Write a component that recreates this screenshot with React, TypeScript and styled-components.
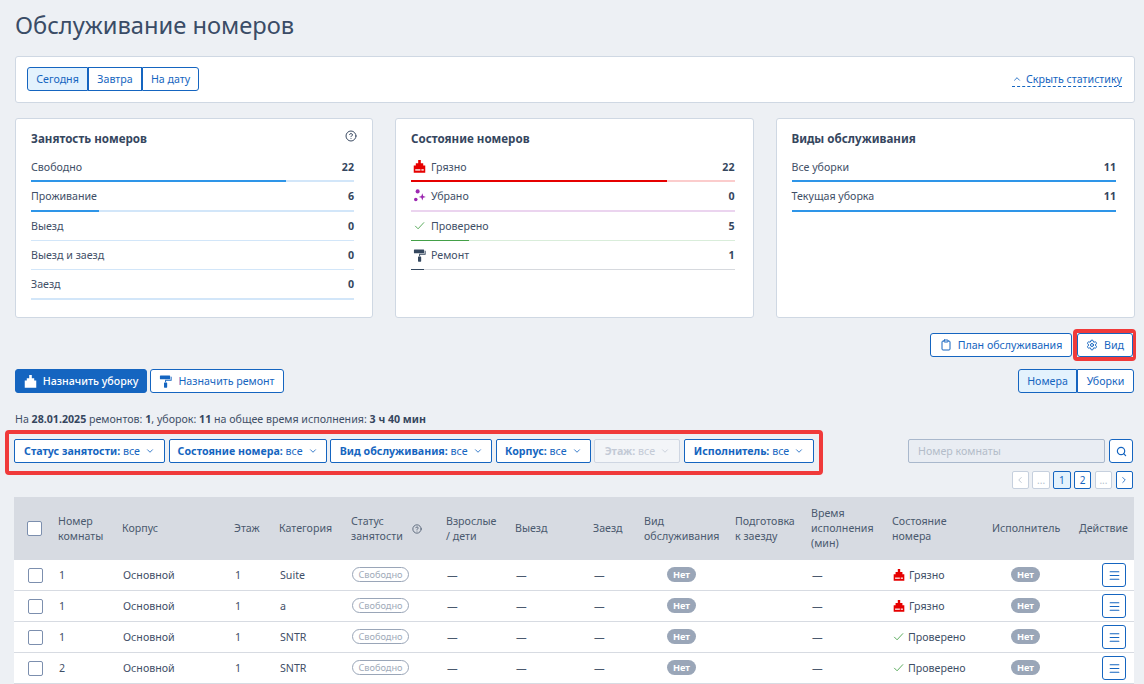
import React from "react"
import styled, { createGlobalStyle } from "styled-components"
import { ChevronDown, ChevronLeft, ChevronRight, ChevronUp, CircleHelp, Clipboard, Menu, Search, Settings } from "lucide-react"

const GlobalStyle = createGlobalStyle`
  html, body {
    margin: 0;
    height: 684px;
    overflow: hidden;
    background: #edf0f4;
    color: #3f4f67;
    font-family: "Noto Sans", "Open Sans", sans-serif;
    font-size: 10.65px;
  }
  * { box-sizing: border-box; }
`

const BLUE = "#1565c0"
const COLUMNS = "44px 64px 112px 45px 72px 95px 69px 78px 51px 91px 76px 81px 100px 87px 55px"

const Page = styled.div`
  padding: 8px 9px 0 15px;
`

const Title = styled.h1`
  margin: 0 0 14px;
  font-size: 23.7px;
  line-height: 34px;
  font-weight: 400;
  color: #3a4c66;
`

const TopPanel = styled.div`
  display: flex;
  align-items: center;
  justify-content: space-between;
  height: 47px;
  padding: 0 12px 1px 11px;
  background: #fff;
  border: 1px solid #cfd8e3;
  border-radius: 3px;
`

const Segments = styled.div`
  display: flex;
`

const Segment = styled.button<{ $active?: boolean; $width: number }>`
  width: ${p => p.$width}px;
  height: 24px;
  padding: 0;
  border: 1px solid ${BLUE};
  background: ${p => (p.$active ? "#e3f2fd" : "#fff")};
  color: ${BLUE};
  font: inherit;
  &:first-child { border-radius: 3px 0 0 3px; }
  &:last-child { border-radius: 0 3px 3px 0; }
`

const HideLink = styled.a`
  display: flex;
  align-items: center;
  gap: 4px;
  height: 15px;
  color: ${BLUE};
  border-bottom: 1px dashed ${BLUE};
`

const Cards = styled.div`
  display: grid;
  grid-template-columns: 358px 358.5px 1fr;
  gap: 22px;
  margin-top: 15px;
`

const Card = styled.section`
  position: relative;
  height: 200px;
  padding: 11px 18px 0 15px;
  background: #fff;
  border: 1px solid #cfd8e3;
  border-radius: 3px;
`

const CardTitle = styled.h2`
  margin: 0 0 5px;
  font-size: 11.6px;
  line-height: 18px;
  font-weight: 700;
  color: #35465e;
`

const CardHelp = styled.span`
  position: absolute;
  top: 11px;
  right: 15px;
  display: flex;
  color: #3b4b63;
`

const StatRow = styled.div`
  height: 29.33px;
  display: flex;
  flex-direction: column;
`

const StatLine = styled.div`
  flex: 1;
  display: flex;
  align-items: center;
  gap: 5px;
`

const StatIcon = styled.span`
  width: 14px;
  height: 14px;
  margin-left: 1px;
  display: flex;
  align-items: center;
  justify-content: center;
`

const StatLabel = styled.span`
  flex: 1;
`

const StatValue = styled.b`
  font-weight: 700;
  color: #35465e;
`

const Track = styled.div<{ $color: string; $thin?: boolean }>`
  height: ${p => (p.$thin ? 1 : 2)}px;
  background: ${p => p.$color};
`

const Fill = styled.div<{ $color: string }>`
  height: 100%;
  background: ${p => p.$color};
`

const ActionsRight = styled.div`
  display: flex;
  justify-content: flex-end;
  align-items: center;
  gap: 1px;
  margin: 11px -1px 0 0;
`

const Highlight = styled.div`
  display: flex;
  border: 4px solid #f03a3a;
  border-right-width: 3px;
  border-radius: 4px;
`

const OutlineButton = styled.button<{ $width?: number }>`
  display: inline-flex;
  align-items: center;
  justify-content: center;
  gap: 6px;
  height: 24px;
  width: ${p => (p.$width ? `${p.$width}px` : "auto")};
  padding: 0;
  background: #fff;
  border: 1px solid ${BLUE};
  border-radius: 3px;
  color: ${BLUE};
  font: inherit;
`

const AssignRow = styled.div`
  display: flex;
  justify-content: space-between;
  margin: 8px 1px 0 0;
`

const AssignGroup = styled.div`
  display: flex;
  gap: 3px;
`

const PrimaryButton = styled(OutlineButton)`
  background: ${BLUE};
  color: #fff;
  font-weight: 500;
`

const Summary = styled.p`
  margin: 17px 0 0;
  line-height: 18px;
  b { font-weight: 700; color: #35465e; }
`

const FilterRow = styled.div`
  display: flex;
  justify-content: space-between;
  align-items: flex-start;
  height: 59px;
  margin: 2px 2px 0 -10px;
`

const FilterBox = styled.div`
  display: flex;
  gap: 3.6px;
  height: 45px;
  padding: 5px;
  border: 4px solid #f03a3a;
  border-radius: 4px;
`

const FilterButton = styled.button<{ $width: number; $disabled?: boolean }>`
  display: flex;
  align-items: center;
  justify-content: center;
  gap: 5px;
  width: ${p => p.$width}px;
  height: 24px;
  padding: 0;
  background: ${p => (p.$disabled ? "#f3f5f8" : "#fff")};
  border: 1px solid ${p => (p.$disabled ? "#cfd6e2" : BLUE)};
  border-radius: 2px;
  color: ${p => (p.$disabled ? "#c3cad6" : BLUE)};
  font: inherit;
  b { font-weight: 700; }
`

const SearchColumn = styled.div`
  display: flex;
  flex-direction: column;
  align-items: flex-end;
  gap: 8px;
  padding-top: 9px;
`

const SearchGroup = styled.div`
  display: flex;
  gap: 4px;
`

const SearchInput = styled.input`
  width: 197px;
  height: 24px;
  padding: 0 9px;
  background: #e9edf3;
  border: 1px solid #a9b8cc;
  border-radius: 2px;
  font: inherit;
  &::placeholder { color: #b3bcc9; opacity: 1; }
`

const Pager = styled.div`
  display: flex;
  gap: 3.3px;
`

const PageButton = styled.button<{ $active?: boolean; $disabled?: boolean }>`
  width: 17.5px;
  height: 18px;
  padding: 0;
  display: flex;
  align-items: center;
  justify-content: center;
  border: 1px solid ${p => (p.$disabled ? "#c6d0de" : BLUE)};
  border-radius: 2px;
  background: ${p => (p.$active ? "#e3f2fd" : "#fff")};
  color: ${p => (p.$disabled ? "#b4bfce" : BLUE)};
  font: 10px "Noto Sans", sans-serif;
`

const Table = styled.div`
  margin: 8px 0 0 -1px;
  width: 1120px;
  background: #fff;
`

const HeadRow = styled.div`
  display: grid;
  grid-template-columns: ${COLUMNS};
  align-items: center;
  height: 63px;
  background: #d7dbe2;
  color: #4a596e;
  line-height: 15px;
`

const HeadCell = styled.div`
  display: flex;
  align-items: center;
  gap: 9px;
`

const BodyRow = styled.div`
  display: grid;
  grid-template-columns: ${COLUMNS};
  align-items: center;
  height: 31px;
  border-bottom: 1px solid #d7dbe2;
`

const Cell = styled.div`
  display: flex;
  align-items: center;
  gap: 4px;
  padding: 0 0 1px 1px;
`

const CheckBox = styled.span<{ $head?: boolean }>`
  display: block;
  width: 15px;
  height: 15px;
  margin-left: ${p => (p.$head ? 13 : 14)}px;
  background: #fff;
  border: 1px solid #7c8fae;
  border-radius: 2px;
`

const StatusPill = styled.span`
  display: inline-flex;
  align-items: center;
  justify-content: center;
  width: 57px;
  height: 15px;
  border: 1px solid #9aa6b8;
  border-radius: 8px;
  color: #a1abba;
  font-size: 9.2px;
`

const NoneBadge = styled.span<{ $offset: number }>`
  display: inline-flex;
  align-items: center;
  justify-content: center;
  width: 29px;
  height: 15px;
  margin-left: ${p => p.$offset}px;
  border-radius: 8px;
  background: #9aa6b8;
  color: #fff;
  font-size: 9.2px;
  font-weight: 700;
`

const MenuButton = styled(OutlineButton)`
  margin-left: 23px;
`

const Dash = styled.span`
  color: #4a596e;
`

const BroomIcon = ({ color = "#e60000", size = 13 }: { color?: string; size?: number }) => (
  <svg width={size} height={size} viewBox="0 0 14 14" fill={color}>
    <path d="M5.6 0h2.8v3.6h2.6v2.4h2.2V13.6H0.8V6h2.2V3.6h2.6z" />
    <rect x="2.4" y="10" width="5.6" height="1.4" fill="#fff" />
    <rect x="9" y="10" width="2.6" height="1.4" fill="#fff" />
  </svg>
)

const SparkIcon = () => (
  <svg width="13" height="13" viewBox="0 0 14 14" fill="#9c27b0">
    <circle cx="5" cy="2.6" r="2.2" />
    <circle cx="3" cy="11.2" r="1.9" />
    <path d="M10 4.6l1 2.9 2.8 1-2.8 1-1 2.9-1-2.9-2.8-1 2.8-1z" />
  </svg>
)

const CheckIcon = () => (
  <svg width="11" height="11" viewBox="0 0 14 14" fill="none" stroke="#43a047" strokeWidth="1.1">
    <path d="M1.5 7.5l3.7 3.7L12.8 3" />
  </svg>
)

const RollerIcon = ({ color = "#34475e" }: { color?: string }) => (
  <svg width="13" height="13" viewBox="0 0 14 14" fill={color}>
    <rect x="1" y="0.6" width="11" height="4" rx="0.6" />
    <path d="M12.6 2h1v4.2H7.6v1.6h-1V5.2h6z" />
    <rect x="5.4" y="8" width="3.4" height="5.6" rx="0.6" />
  </svg>
)

const bars = {
  blue: { track: "#d2e6f9", fill: "#2e95e8" },
  red: { track: "#fbcccc", fill: "#e60000" },
  purple: { track: "#ebd4ef", fill: "#9c27b0" },
  green: { track: "#d9edda", fill: "#43a047" },
  dark: { track: "#d6d9de", fill: "#34475e" },
}

type Stat = {
  label: string
  value: number
  percent: number
  bar: keyof typeof bars
  thin?: boolean
  icon?: React.ReactNode
}

const occupancy: Stat[] = [
  { label: "Свободно", value: 22, percent: 79, bar: "blue" },
  { label: "Проживание", value: 6, percent: 21, bar: "blue" },
  { label: "Выезд", value: 0, percent: 0, bar: "blue", thin: true },
  { label: "Выезд и заезд", value: 0, percent: 0, bar: "blue", thin: true },
  { label: "Заезд", value: 0, percent: 0, bar: "blue" },
]

const roomStates: Stat[] = [
  { label: "Грязно", value: 22, percent: 79, bar: "red", icon: <BroomIcon /> },
  { label: "Убрано", value: 0, percent: 0, bar: "purple", icon: <SparkIcon /> },
  { label: "Проверено", value: 5, percent: 18, bar: "green", thin: true, icon: <CheckIcon /> },
  { label: "Ремонт", value: 1, percent: 4, bar: "dark", thin: true, icon: <RollerIcon /> },
]

const services: Stat[] = [
  { label: "Все уборки", value: 11, percent: 100, bar: "blue" },
  { label: "Текущая уборка", value: 11, percent: 100, bar: "blue" },
]

const filters = [
  { label: "Статус занятости:", width: 151 },
  { label: "Состояние номера:", width: 158 },
  { label: "Вид обслуживания:", width: 162 },
  { label: "Корпус:", width: 95 },
  { label: "Этаж:", width: 86, disabled: true },
  { label: "Исполнитель:", width: 130 },
]

const rooms = [
  { number: "1", category: "Suite", dirty: true },
  { number: "1", category: "a", dirty: true },
  { number: "1", category: "SNTR", dirty: false },
  { number: "2", category: "SNTR", dirty: false },
]

const StatList = ({ items }: { items: Stat[] }) => (
  <>
    {items.map(item => (
      <StatRow key={item.label}>
        <StatLine>
          {item.icon && <StatIcon>{item.icon}</StatIcon>}
          <StatLabel>{item.label}</StatLabel>
          <StatValue>{item.value}</StatValue>
        </StatLine>
        <Track $color={bars[item.bar].track} $thin={item.thin}>
          <Fill $color={bars[item.bar].fill} style={{ width: `${item.percent}%` }} />
        </Track>
      </StatRow>
    ))}
  </>
)

export default function App() {
  return (
    <Page>
      <GlobalStyle />
      <Title>Обслуживание номеров</Title>

      <TopPanel>
        <Segments>
          <Segment $active $width={61}>Сегодня</Segment>
          <Segment $width={54}>Завтра</Segment>
          <Segment $width={57}>На дату</Segment>
        </Segments>
        <HideLink>
          <ChevronUp size={10} />
          Скрыть статистику
        </HideLink>
      </TopPanel>

      <Cards>
        <Card>
          <CardTitle>Занятость номеров</CardTitle>
          <CardHelp><CircleHelp size={12} /></CardHelp>
          <StatList items={occupancy} />
        </Card>
        <Card>
          <CardTitle>Состояние номеров</CardTitle>
          <StatList items={roomStates} />
        </Card>
        <Card>
          <CardTitle>Виды обслуживания</CardTitle>
          <StatList items={services} />
        </Card>
      </Cards>

      <ActionsRight>
        <OutlineButton $width={142}><Clipboard size={12} />План обслуживания</OutlineButton>
        <Highlight>
          <OutlineButton $width={56}><Settings size={12} />Вид</OutlineButton>
        </Highlight>
      </ActionsRight>

      <AssignRow>
        <AssignGroup>
          <PrimaryButton $width={132}><BroomIcon color="#fff" />Назначить уборку</PrimaryButton>
          <OutlineButton $width={134}><RollerIcon color={BLUE} />Назначить ремонт</OutlineButton>
        </AssignGroup>
        <Segments>
          <Segment $active $width={59}>Номера</Segment>
          <Segment $width={57}>Уборки</Segment>
        </Segments>
      </AssignRow>

      <Summary>
        На <b>28.01.2025</b> ремонтов: <b>1</b>, уборок: <b>11</b> на общее время исполнения: <b>3 ч 40 мин</b>
      </Summary>

      <FilterRow>
        <FilterBox>
          {filters.map(f => (
            <FilterButton key={f.label} $width={f.width} $disabled={f.disabled}>
              <span><b>{f.label}</b> все</span>
              <ChevronDown size={10} />
            </FilterButton>
          ))}
        </FilterBox>
        <SearchColumn>
          <SearchGroup>
            <SearchInput placeholder="Номер комнаты" />
            <OutlineButton $width={24}><Search size={11} strokeWidth={2.6} /></OutlineButton>
          </SearchGroup>
          <Pager>
            <PageButton $disabled><ChevronLeft size={10} /></PageButton>
            <PageButton $disabled>...</PageButton>
            <PageButton $active>1</PageButton>
            <PageButton>2</PageButton>
            <PageButton $disabled>...</PageButton>
            <PageButton><ChevronRight size={10} /></PageButton>
          </Pager>
        </SearchColumn>
      </FilterRow>

      <Table>
        <HeadRow>
          <CheckBox $head />
          <HeadCell><span>Номер<br />комнаты</span></HeadCell>
          <HeadCell>Корпус</HeadCell>
          <HeadCell>Этаж</HeadCell>
          <HeadCell>Категория</HeadCell>
          <HeadCell><span>Статус<br />занятости</span><CircleHelp size={10} /></HeadCell>
          <HeadCell><span>Взрослые<br />/ дети</span></HeadCell>
          <HeadCell>Выезд</HeadCell>
          <HeadCell>Заезд</HeadCell>
          <HeadCell><span>Вид<br />обслуживания</span></HeadCell>
          <HeadCell><span>Подготовка<br />к заезду</span></HeadCell>
          <HeadCell><span>Время<br />исполнения<br />(мин)</span></HeadCell>
          <HeadCell><span>Состояние<br />номера</span></HeadCell>
          <HeadCell>Исполнитель</HeadCell>
          <HeadCell>Действие</HeadCell>
        </HeadRow>
        {rooms.map((room, i) => (
          <BodyRow key={i}>
            <CheckBox />
            <Cell>{room.number}</Cell>
            <Cell>Основной</Cell>
            <Cell>1</Cell>
            <Cell>{room.category}</Cell>
            <Cell><StatusPill>Свободно</StatusPill></Cell>
            <Cell><Dash>—</Dash></Cell>
            <Cell><Dash>—</Dash></Cell>
            <Cell><Dash>—</Dash></Cell>
            <Cell><NoneBadge $offset={22}>Нет</NoneBadge></Cell>
            <Cell />
            <Cell><Dash>—</Dash></Cell>
            <Cell>
              {room.dirty ? <BroomIcon size={12} /> : <CheckIcon />}
              {room.dirty ? "Грязно" : "Проверено"}
            </Cell>
            <Cell><NoneBadge $offset={18}>Нет</NoneBadge></Cell>
            <MenuButton $width={24}><Menu size={13} /></MenuButton>
          </BodyRow>
        ))}
      </Table>
    </Page>
  )
}
